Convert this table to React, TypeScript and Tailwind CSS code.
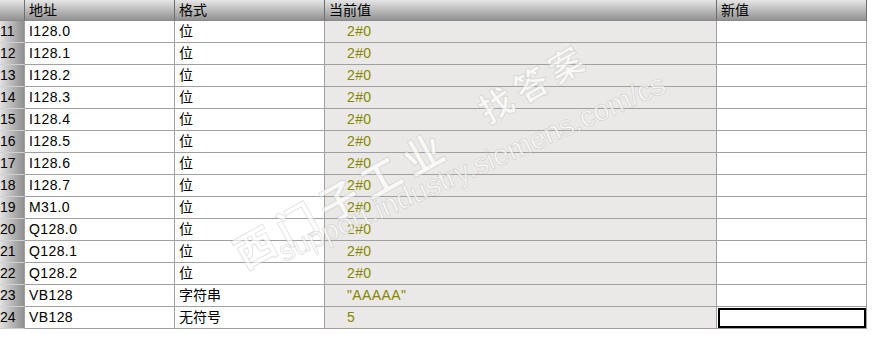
const ROWS = [
  { n: 11, addr: 'I128.0', fmt: '位', cur: '2#0' },
  { n: 12, addr: 'I128.1', fmt: '位', cur: '2#0' },
  { n: 13, addr: 'I128.2', fmt: '位', cur: '2#0' },
  { n: 14, addr: 'I128.3', fmt: '位', cur: '2#0' },
  { n: 15, addr: 'I128.4', fmt: '位', cur: '2#0' },
  { n: 16, addr: 'I128.5', fmt: '位', cur: '2#0' },
  { n: 17, addr: 'I128.6', fmt: '位', cur: '2#0' },
  { n: 18, addr: 'I128.7', fmt: '位', cur: '2#0' },
  { n: 19, addr: 'M31.0', fmt: '位', cur: '2#0' },
  { n: 20, addr: 'Q128.0', fmt: '位', cur: '2#0' },
  { n: 21, addr: 'Q128.1', fmt: '位', cur: '2#0' },
  { n: 22, addr: 'Q128.2', fmt: '位', cur: '2#0' },
  { n: 23, addr: 'VB128', fmt: '字符串', cur: '"AAAAA"' },
  { n: 24, addr: 'VB128', fmt: '无符号', cur: '5' },
]

const COLS = 'grid grid-cols-[25px_150px_150px_392px_150px] w-[867px]'

function HeaderCell({ label }: { label?: string }) {
  return (
    <div className="h-[21px] border-r border-b border-r-[#6e6e6e] border-b-[#8a8a8a] bg-gradient-to-b from-[#e6e6e6] to-[#929292] pl-1 text-[14px] leading-[20px] text-black">
      {label}
    </div>
  )
}

export default function App() {
  return (
    <div
      className="relative h-[345px] w-[881px] overflow-hidden bg-white"
      style={{ fontFamily: '"Liberation Sans", "Noto Sans CJK SC", sans-serif' }}
    >
      <div className={COLS}>
        <HeaderCell />
        <HeaderCell label="地址" />
        <HeaderCell label="格式" />
        <HeaderCell label="当前值" />
        <HeaderCell label="新值" />
      </div>

      {ROWS.map((r, i) => {
        const last = i === ROWS.length - 1
        return (
          <div key={r.n} className={COLS}>
            <div className="h-[22px] border-r border-b border-r-[#a0a0a0] border-b-[#d0d0d0] bg-gradient-to-r from-[#e2e2e2] to-[#8f8f8f] text-[14px] leading-[21px] text-black">
              {r.n}
            </div>
            <div className="h-[22px] border-r border-b border-[#a0a0a0] pl-1 text-[14px] leading-[21px] tracking-[0.4px] text-black">
              {r.addr}
            </div>
            <div className="h-[22px] border-r border-b border-[#a0a0a0] pl-1 text-[14px] leading-[21px] text-black">
              {r.fmt}
            </div>
            <div className="h-[22px] border-r border-b border-[#a0a0a0] bg-[#ebe9e7] pl-[22px] text-[14px] leading-[21px] tracking-[0.4px] text-[#868600]">
              {r.cur}
            </div>
            <div className="h-[22px] border-r border-b border-[#a0a0a0] bg-white">
              {last && <div className="ml-px mt-px h-[20px] w-[148px] border-2 border-black" />}
            </div>
          </div>
        )
      })}

      {/* faint site watermark */}
      <div className="pointer-events-none absolute left-[238px] top-[228px] origin-left -rotate-[29deg] text-[40px] leading-[60px] font-bold tracking-[8px] text-white/70 [-webkit-text-stroke:1px_rgba(160,160,160,0.3)]">
        西门子工业
      </div>
      <div className="pointer-events-none absolute left-[482px] top-[88px] origin-left -rotate-[30deg] text-[34px] leading-[52px] font-bold tracking-[6px] text-white/70 [-webkit-text-stroke:1px_rgba(160,160,160,0.3)]">
        找答案
      </div>
      <div className="pointer-events-none absolute left-[280px] top-[232px] origin-left -rotate-[24deg] whitespace-nowrap text-[29px] leading-[42px] text-white/70 [-webkit-text-stroke:1px_rgba(160,160,160,0.3)]">
        support.industry.siemens.com/cs
      </div>
    </div>
  )
}
